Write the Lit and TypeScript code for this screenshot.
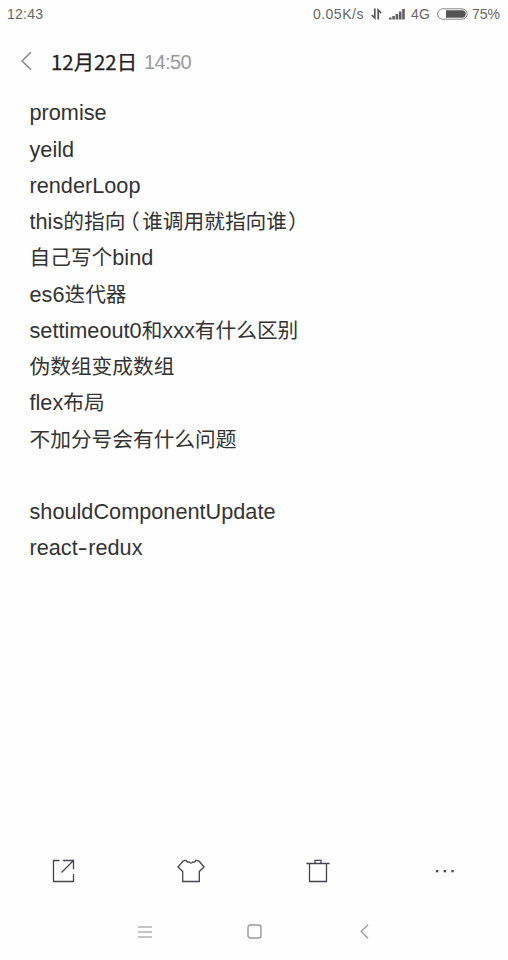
import { LitElement, html, css, svg } from "lit";
import { customElement, property } from "lit/decorators.js";

const NOTE_LINES = [
  "promise",
  "yeild",
  "renderLoop",
  "this的指向（谁调用就指向谁）",
  "自己写个bind",
  "es6迭代器",
  "settimeout0和xxx有什么区别",
  "伪数组变成数组",
  "flex布局",
  "不加分号会有什么问题",
  "",
  "shouldComponentUpdate",
  "react-redux",
];

@customElement("status-bar")
class StatusBar extends LitElement {
  static styles = css`
    :host {
      display: flex;
      align-items: center;
      height: 27px;
      padding: 0 8px 0 7px;
      font-size: 14px;
      color: #666;
    }
    .clock { flex: 1; letter-spacing: 0.25px; }
    .rate { letter-spacing: 0.5px; margin-right: 7px; }
    .net { letter-spacing: 0.2px; margin-right: 7px; }
    svg { display: block; }
    .arrows { margin-right: 7px; }
    .signal { margin-right: 6px; }
    .battery { margin-right: 4px; }
  `;
  render() {
    return html`
      <span class="clock">12:43</span>
      <span class="rate">0.05K/s</span>
      <svg class="arrows" width="11" height="12" viewBox="0 0 11 12" fill="none" stroke="#555" stroke-width="1.7">
        <path d="M3.8 0.5V10L0.8 7M7.2 11.5V2L10.2 5" />
      </svg>
      <svg class="signal" width="16" height="12" viewBox="0 0 16 12" fill="#606060">
        ${[2, 3.5, 5.5, 8, 10.5].map((h, i) => svg`<rect x=${i * 3.3} y=${11.5 - h} width="2.6" height=${h} />`)}
      </svg>
      <span class="net">4G</span>
      <svg class="battery" width="31" height="12" viewBox="0 0 31 12">
        <rect x="0.6" y="0.8" width="29.6" height="10.4" rx="5.2" fill="none" stroke="#888" />
        <path d="M9 2.3H25A3.7 3.7 0 0 1 25 9.7H9Z" fill="#555" />
      </svg>
      <span>75%</span>
    `;
  }
}

@customElement("note-line")
class NoteLine extends LitElement {
  @property() text = "";
  static styles = css`
    :host { display: block; height: 36.25px; line-height: 36.25px; white-space: nowrap; font-size: 20.7px; }
    .latin { font-size: 21.7px; }
    .dash { display: inline-block; width: 10.5px; transform: scaleX(1.4); transform-origin: 10% 50%; }
    .open, .close { font-feature-settings: "halt"; }
    .open { padding: 0 2.5px 0 4px; }
    .close { padding-left: 1px; }
  `;
  render() {
    const runs = this.text.match(/[a-zA-Z0-9]+|-|（|）|[^a-zA-Z0-9（）-]+/g) ?? [];
    return runs.map((run) => {
      const kind =
        run === "-" ? "latin dash" : run === "（" ? "open" : run === "）" ? "close" : /^[a-z0-9]/i.test(run) ? "latin" : "han";
      return html`<span class=${kind}>${run}</span>`;
    });
  }
}

@customElement("app-root")
class AppRoot extends LitElement {
  static styles = css`
    :host {
      display: flex;
      flex-direction: column;
      height: 960px;
      background: #fefefe;
      color: #333;
      font-family: "Liberation Sans", "Noto Sans CJK SC", sans-serif;
      overflow: hidden;
    }
    svg { display: block; }
    header { display: flex; align-items: center; height: 68.4px; padding-left: 20px; }
    .back { margin-right: 18px; }
    .date {
      width: 85px;
      white-space: nowrap;
      font-family: "Noto Sans CJK SC", sans-serif;
      font-size: 20.4px;
      -webkit-text-stroke: 0.25px #222;
      color: #222;
    }
    .time { font-size: 20px; color: #999; margin-left: 8px; letter-spacing: -0.6px; padding-top: 3px; }
    main { flex: 1; padding-left: 29.5px; }
    .tools { display: grid; grid-template-columns: repeat(4, 127px); justify-items: center; align-items: center; height: 58px; }
    .nav { display: grid; grid-template-columns: repeat(3, 110px); justify-content: center; justify-items: center; align-items: center; height: 60px; padding: 3px 0 0 1px; box-sizing: border-box; }
  `;
  render() {
    return html`
      <status-bar></status-bar>
      <header>
        <svg class="back" width="13" height="20" viewBox="0 0 13 20" fill="none" stroke="#888" stroke-width="1.5">
          <path d="M11 1.2L2 10L11 18.8" />
        </svg>
        <span class="date">12月22日</span>
        <span class="time">14:50</span>
      </header>
      <main>${NOTE_LINES.map((t) => html`<note-line .text=${t}></note-line>`)}</main>
      <div class="tools">
        <svg width="24" height="24" viewBox="0 0 24 24" fill="none" stroke="#444350" stroke-width="1.3">
          <path d="M7.5 1.5H1.5V22.5H21.5V15M11 1.5H21.5V10M21.5 1.5L9.5 13.5" />
        </svg>
        <svg width="28" height="24" viewBox="0 0 28 24" fill="none" stroke="#444350" stroke-width="1.3">
          <path d="M9 1.2Q10 3.7 12 2.9Q14 5.4 16 2.9Q18 3.7 19 1.2L22 2L27 8L22.3 12.5V22.5H5.7V12.5L1 8L6 2Z" />
        </svg>
        <svg width="24" height="24" viewBox="0 0 24 24" fill="none" stroke="#444350" stroke-width="1.3">
          <path d="M0.4 4.5H23.6M9 4.5V1.3H15V4.5M3.5 4.5V22.5H20.5V4.5" />
        </svg>
        <svg width="20" height="4" viewBox="0 0 20 4" fill="#444350">
          <rect x="1" y="1" width="2.3" height="2.3" /><rect x="8.7" y="1" width="2.3" height="2.3" /><rect x="16.4" y="1" width="2.3" height="2.3" />
        </svg>
      </div>
      <div class="nav">
        <svg width="14" height="12" viewBox="0 0 14 12" stroke="#8c8c8c" stroke-width="1.2">
          <path d="M0 1H14M0 6H14M0 11H14" />
        </svg>
        <svg width="15" height="15" viewBox="0 0 15 15" fill="none" stroke="#999" stroke-width="1.4">
          <rect x="1" y="1" width="13" height="13" rx="2.5" />
        </svg>
        <svg width="9" height="15" viewBox="0 0 9 15" fill="none" stroke="#999" stroke-width="1.3">
          <path d="M8 0.8L1.2 7.5L8 14.2" />
        </svg>
      </div>
    `;
  }
}
